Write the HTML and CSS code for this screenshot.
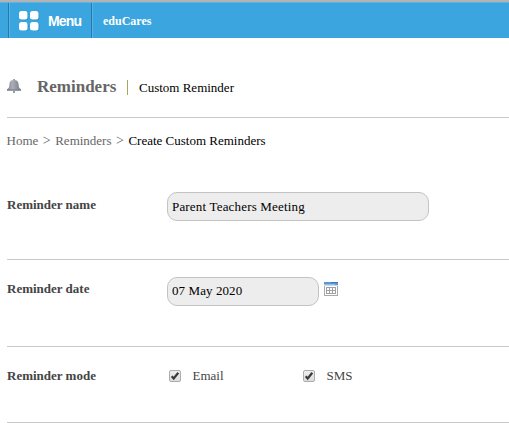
FILE: index.html
```html
<!DOCTYPE html>
<html lang="en">
<head>
<meta charset="utf-8">
<title>Create Custom Reminders</title>
<link rel="stylesheet" href="styles.css">
</head>
<body>
<header class="topbar">
  <div class="menu">
    <svg class="menu-icon" width="22" height="21" viewBox="0 0 22 21">
      <g fill="#1f7db3" opacity=".45" transform="translate(.8 .8)"><rect x="1" y="1" width="8.500" height="8.500" rx="2.500"/><rect x="12" y="1" width="8.500" height="8.500" rx="2.500"/><rect x="1" y="12" width="8.500" height="8.500" rx="2.500"/><rect x="12" y="12" width="8.500" height="8.500" rx="2.500"/></g>
      <g fill="#fff"><rect x="1" y="1" width="8.500" height="8.500" rx="2.500"/><rect x="12" y="1" width="8.500" height="8.500" rx="2.500"/><rect x="1" y="12" width="8.500" height="8.500" rx="2.500"/><rect x="12" y="12" width="8.500" height="8.500" rx="2.500"/></g>
    </svg>
    <span class="menu-label">Menu</span>
  </div>
  <span class="brand">eduCares</span>
</header>
<main>
  <div class="heading">
    <svg class="bell" width="15" height="15" viewBox="0 0 15 15">
      <defs><linearGradient id="metal" x1="0" x2="1"><stop offset="0" stop-color="#85868c"/><stop offset=".4" stop-color="#a8adb8"/><stop offset="1" stop-color="#787b85"/></linearGradient></defs>
      <path d="M6 1V0h2v1c2.600.5 3.600 2.200 3.600 4.600 0 2.400.6 3.700 2.400 4.700v1H0v-1c1.800-1 2.400-2.300 2.400-4.700C2.400 3.200 3.400 1.500 6 1z" fill="url(#metal)"/>
      <path d="M0 10.500h14v1.200H0z" fill="#777b86"/>
      <path d="M6 12.200h2v1.600H6z" fill="#777a84"/>
    </svg>
    <h1>Reminders</h1>
    <span class="divider"></span>
    <span class="subtitle">Custom Reminder</span>
  </div>
  <nav class="crumbs"><span>Home</span><span class="sep">&gt;</span><span>Reminders</span><span class="sep">&gt;</span><span class="current">Create Custom Reminders</span></nav>
  <form>
    <div class="row name-row">
      <label class="caption" for="name">Reminder name</label>
      <input class="field name" id="name" type="text" value="Parent Teachers Meeting">
    </div>
    <div class="row date-row">
      <label class="caption" for="date">Reminder date</label>
      <input class="field date" id="date" type="text" value="07 May 2020">
      <svg class="calendar" width="14" height="14" viewBox="0 0 14 14" shape-rendering="crispEdges">
        <path fill="#a9a9a9" d="M0 3h14v11H0z"/><path fill="#fff" d="M1 4h12v9H1z"/>
        <path fill="#5b98d3" d="M0 0h14v4H0z"/><path fill="#3f78c0" d="M7 0h7v1H7z"/><path fill="#8fc0ea" d="M0 2h11v1H0z"/><path fill="#c5dcf0" d="M0 3h14v1H0z"/>
        <path fill="#a0a0a0" d="M2 5h10v7H2z"/><path fill="#fff" d="M3 6h2v2H3zM6 6h2v2H6zM9 6h2v2H9zM3 9h2v2H3zM6 9h2v2H6zM9 9h2v2H9z"/>
      </svg>
    </div>
    <div class="row mode-row">
      <span class="caption">Reminder mode</span>
      <label class="option"><input type="checkbox" checked><svg class="check" width="12" height="12" viewBox="0 0 12 12"><path d="M2.700 6.200l2 2.300 4.600-5.800" fill="none" stroke="#3b3b3b" stroke-width="2.200"/></svg>Email</label>
      <label class="option"><input type="checkbox" checked><svg class="check" width="12" height="12" viewBox="0 0 12 12"><path d="M2.700 6.200l2 2.300 4.600-5.800" fill="none" stroke="#3b3b3b" stroke-width="2.200"/></svg>SMS</label>
    </div>
  </form>
</main>
</body>
</html>
```
FILE: styles.css
```css
* { box-sizing: border-box; }
body {
  margin: 0;
  height: 423px;
  overflow: hidden;
  background: #fff;
  color: #444;
  font: 13px/16px "Liberation Serif", serif;
}
.topbar {
  display: flex;
  height: 38px;
  padding-left: 8px;
  border-top: 2px solid #b3b3b3;
  background: #3aa5de;
  box-shadow: inset 0 1px #5ab4e3;
  color: #fff;
}
.menu {
  display: flex;
  align-items: center;
  width: 84px;
  margin-top: 1px;
  padding-left: 9px;
  border: solid #2379a7;
  border-width: 0 1px;
  box-shadow: inset 1px 0 #5ab4e3, 1px 0 #5ab4e3;
}
.menu-label {
  margin-left: 8px;
  font: bold 14px/18px "Liberation Sans", sans-serif;
  letter-spacing: -.8px;
}
.brand {
  margin: 11px 0 0 11px;
  font-size: 12px;
  font-weight: bold;
}
main { padding-left: 7px; }
.heading {
  display: flex;
  height: 80px;
  padding-top: 40px;
  border-bottom: 1px solid #c9c9c9;
}
.bell { margin-top: 1px; }
h1 {
  width: 79px;
  margin: -1px 0 0 15px;
  color: #666;
  font-size: 17px;
  line-height: 20px;
  white-space: nowrap;
}
.divider {
  width: 1px;
  height: 15px;
  margin: 2px 11px 0;
  background: #a6a65c;
}
.subtitle { margin-top: 2px; color: #000; }
.crumbs {
  display: flex;
  height: 40px;
  margin-left: -.5px;
  padding-top: 15px;
  color: #666;
}
.sep { margin: 0 4.500px; font-size: 14px; }
.current { color: #000; }
.row { display: flex; border-bottom: 1px solid #c9c9c9; }
.caption { width: 160px; font-weight: bold; }
.field {
  height: 29px;
  padding: 0 4px;
  border: 1px solid #c3c3c3;
  border-radius: 10px;
  outline: 0;
  background: #ededed;
  color: #000;
  font: inherit;
}
.name-row { height: 102px; padding-top: 34px; }
.name-row .caption { margin-top: 5px; }
.date-row .caption { margin-top: 4px; }
.name { width: 262px; letter-spacing: .18px; }
.date-row { height: 87px; padding-top: 17px; }
.date { width: 152px; padding-bottom: 2px; letter-spacing: .08px; }
.calendar { margin: 5px 0 0 5px; }
.mode-row { height: 76px; padding-top: 21px; }
.option {
  display: flex;
  position: relative;
  width: 134px;
  padding-left: 2px;
}
.option input {
  appearance: none;
  width: 12px;
  height: 12px;
  margin: 2px 11.500px 0 0;
  border: 1px solid #acacac;
  border-radius: 2px;
  background: linear-gradient(#eee, #ddd);
}
.check { position: absolute; left: 2px; top: 2px; }
```
